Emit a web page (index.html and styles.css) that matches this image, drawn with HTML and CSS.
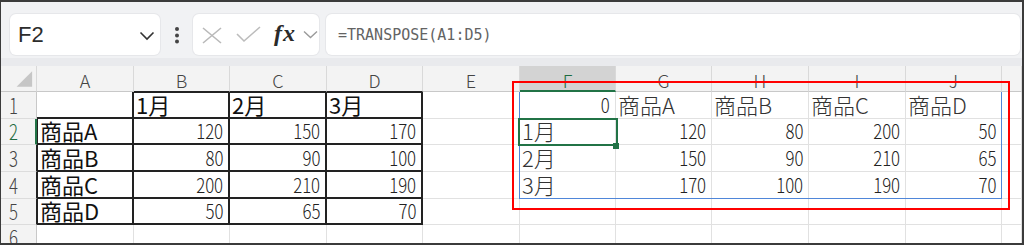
FILE: index.html
```html
<!DOCTYPE html>
<html lang="ja">
<head>
<meta charset="utf-8">
<title>TRANSPOSE</title>
<link rel="stylesheet" href="styles.css">
</head>
<body>
<div class="frame">
  <div class="toolbar">
    <div class="box namebox">
      <span class="val">F2</span>
      <svg class="chev" width="16" height="10" viewBox="0 0 16 10"><path d="M1.5 1.5 L8 8 L14.5 1.5" fill="none" stroke="#333" stroke-width="1.6"/></svg>
    </div>
    <div class="dots">
      <svg width="6" height="18" viewBox="0 0 6 18"><circle cx="3" cy="3" r="2" fill="#444"/><circle cx="3" cy="9.5" r="2" fill="#444"/><circle cx="3" cy="15.5" r="2" fill="#444"/></svg>
    </div>
    <div class="box fxbox">
      <svg class="ic-x" width="20" height="17" viewBox="0 0 20 17"><path d="M1 1 L19 16 M19 1 L1 16" fill="none" stroke="#b9b9b9" stroke-width="1.6"/></svg>
      <svg class="ic-ok" width="25" height="17" viewBox="0 0 25 17"><path d="M1 8 L8 15 L24 1" fill="none" stroke="#bcbcbc" stroke-width="1.6"/></svg>
      <span class="fx">fx</span>
      <svg class="ic-dd" width="15" height="9" viewBox="0 0 15 9"><path d="M1 1.5 L7.5 7.5 L14 1.5" fill="none" stroke="#9a9a9a" stroke-width="1.4"/></svg>
    </div>
    <div class="box formula">=TRANSPOSE(A1:D5)</div>
  </div>

  <div class="grid">
    <!-- header row -->
    <div class="c h corner"><svg width="36" height="25" viewBox="0 0 36 25"><polygon points="16,21 32,5 32,21" fill="#c6c6c6"/></svg></div>
    <div class="c h">A</div>
    <div class="c h hb">B</div>
    <div class="c h hb">C</div>
    <div class="c h hb">D</div>
    <div class="c h">E</div>
    <div class="c h selc">F</div>
    <div class="c h">G</div>
    <div class="c h">H</div>
    <div class="c h">I</div>
    <div class="c h">J</div>
    <div class="c h"></div>

    <!-- row 1 -->
    <div class="c r"><span>1</span></div>
    <div class="c bd"></div>
    <div class="c t bd bt">1月</div>
    <div class="c t bd bt">2月</div>
    <div class="c t bd bt">3月</div>
    <div class="c"></div>
    <div class="c n"><span>0</span></div>
    <div class="c t sp">商品A</div>
    <div class="c t sp">商品B</div>
    <div class="c t sp">商品C</div>
    <div class="c t sp">商品D</div>
    <div class="c"></div>

    <!-- row 2 -->
    <div class="c r selr"><span>2</span></div>
    <div class="c t bd bl">商品A</div>
    <div class="c n bd"><span>120</span></div>
    <div class="c n bd"><span>150</span></div>
    <div class="c n bd"><span>170</span></div>
    <div class="c"></div>
    <div class="c t sp">1月</div>
    <div class="c n"><span>120</span></div>
    <div class="c n"><span>80</span></div>
    <div class="c n"><span>200</span></div>
    <div class="c n"><span>50</span></div>
    <div class="c"></div>

    <!-- row 3 -->
    <div class="c r rb"><span>3</span></div>
    <div class="c t bd bl">商品B</div>
    <div class="c n bd"><span>80</span></div>
    <div class="c n bd"><span>90</span></div>
    <div class="c n bd"><span>100</span></div>
    <div class="c"></div>
    <div class="c t sp">2月</div>
    <div class="c n"><span>150</span></div>
    <div class="c n"><span>90</span></div>
    <div class="c n"><span>210</span></div>
    <div class="c n"><span>65</span></div>
    <div class="c"></div>

    <!-- row 4 -->
    <div class="c r rb"><span>4</span></div>
    <div class="c t bd bl">商品C</div>
    <div class="c n bd"><span>200</span></div>
    <div class="c n bd"><span>210</span></div>
    <div class="c n bd"><span>190</span></div>
    <div class="c"></div>
    <div class="c t sp">3月</div>
    <div class="c n"><span>170</span></div>
    <div class="c n"><span>100</span></div>
    <div class="c n"><span>190</span></div>
    <div class="c n"><span>70</span></div>
    <div class="c"></div>

    <!-- row 5 -->
    <div class="c r rb"><span>5</span></div>
    <div class="c t bd bl">商品D</div>
    <div class="c n bd"><span>50</span></div>
    <div class="c n bd"><span>65</span></div>
    <div class="c n bd"><span>70</span></div>
    <div class="c"></div>
    <div class="c"></div>
    <div class="c"></div>
    <div class="c"></div>
    <div class="c"></div>
    <div class="c"></div>
    <div class="c"></div>

    <!-- row 6 -->
    <div class="c r"><span>6</span></div>
    <div class="c"></div>
    <div class="c"></div>
    <div class="c"></div>
    <div class="c"></div>
    <div class="c"></div>
    <div class="c"></div>
    <div class="c"></div>
    <div class="c"></div>
    <div class="c"></div>
    <div class="c"></div>
    <div class="c"></div>

    <div class="spill"></div>
    <div class="sel"></div>
    <div class="handle"></div>
    <div class="note"></div>
  </div>
</div>
</body>
</html>
```
FILE: styles.css
```css
* { box-sizing: border-box; margin: 0; padding: 0; }
html, body { width: 1024px; height: 245px; overflow: hidden; background: #fff; }

.frame {
  width: 1024px;
  height: 245px;
  border: solid #3b3b3b;
  border-width: 2px 2px 2px 1px;
  overflow: hidden;
  display: flex;
  flex-direction: column;
  background: #fff;
}

/* ---------- toolbar ---------- */
.toolbar {
  flex: none;
  height: 64px;
  display: flex;
  align-items: center;
  background: #f1f2f4;
  padding: 12px 2px 3px 9px;
  border-bottom: 8px solid #e9eaed;
}
.box {
  height: 41px;
  background: #fff;
  border-radius: 6px;
  display: flex;
  align-items: center;
  box-shadow: 0 0 0 1px #e6e7ea;
}
.namebox {
  width: 150px;
  padding: 0 5px 0 8px;
  justify-content: space-between;
}
.namebox .val {
  font: 22px "Liberation Sans", Arial, sans-serif;
  color: #2c2c2c;
}
.chev { margin-top: 2px; }
.dots {
  width: 33px;
  display: flex;
  justify-content: center;
}
.dots svg { margin-left: 1px; margin-top: 1px; }
.fxbox {
  width: 126px;
  padding-left: 9px;
}
.ic-x { margin-top: 1px; }
.ic-ok { margin-left: 14px; margin-top: -1px; }
.fx {
  margin-left: 13px;
  font: italic bold 24px "Liberation Serif", "Times New Roman", serif;
  letter-spacing: 1px;
  color: #2a2a2a;
  line-height: 1;
  margin-top: -3px;
}
.ic-dd { margin-left: 7px; }
.formula {
  flex: 1;
  margin-left: 7px;
  padding-left: 12px;
  font: 15px "DejaVu Sans Mono", monospace;
  color: #636363;
}

/* ---------- grid ---------- */
.grid {
  position: relative;
  flex: none;
  display: grid;
  grid-template-columns: 36px 97px 96px 97px 96px 97px 96px 96px 97px 97px 96px 1fr;
  grid-template-rows: 26px 27px 26px 27px 27px 26px 26px;
  font-family: "Noto Sans CJK JP", sans-serif;
}
.c {
  display: flex;
  align-items: flex-end;
  border-right: 1px solid #e1e1e1;
  border-bottom: 1px solid #e1e1e1;
  padding: 0 5px 3px 2px;
  font-size: 22px;
  line-height: 1;
  color: #111;
  white-space: nowrap;
}
.t { justify-content: flex-start; }
.sp { color: #333; font-weight: 300; }
.n { justify-content: flex-end; color: #222; }
.n span {
  display: inline-block;
  font-size: 20px;
  font-weight: 300;
  transform: scaleX(.84);
  transform-origin: 100% 100%;
}

/* headers */
.h {
  background: #f3f3f3;
  justify-content: center;
  padding: 0 0 2px 0;
  font-size: 18px;
  font-weight: 300;
  color: #444;
  border-right-color: #d9d9d9;
  border-bottom-color: #c8c8c8;
}
.corner { padding: 0; align-items: flex-start; justify-content: flex-start; }
.corner svg { display: block; }
.hb { border-bottom-color: #222; }
.selc {
  background: #d3d3d3;
  color: #1d6b40;
  border-bottom: 2px solid #217346;
  padding-bottom: 1px;
}
.r {
  background: #f3f3f3;
  padding: 0 0 2px 8px;
  color: #444;
  border-right-color: #c8c8c8;
  border-bottom-color: #dcdcdc;
}
.r span {
  display: inline-block;
  font-size: 21px;
  font-weight: 300;
  transform: scaleX(.8);
  transform-origin: 0 100%;
}
.rb { border-right-color: #222; }
.selr {
  color: #1d6b40;
  border-right: 2px solid #217346;
}

/* table borders A1:D5 */
.bd {
  border-right: 2px solid #222;
  border-bottom: 2px solid #222;
  padding-bottom: 2px;
}
.bt { box-shadow: inset 0 1px 0 #222; }
.bl { box-shadow: inset 1px 0 0 #222; padding-left: 3px; }

/* overlays */
.spill {
  position: absolute;
  left: 518px;
  top: 26px;
  width: 483px;
  height: 107px;
  border: 1px solid #4f86d9;
  border-top: 0;
}
.sel {
  position: absolute;
  left: 517px;
  top: 52px;
  width: 100px;
  height: 28px;
  border: 2px solid #217346;
}
.handle {
  position: absolute;
  left: 612px;
  top: 77px;
  width: 6px;
  height: 6px;
  background: #217346;
}
.note {
  position: absolute;
  left: 511px;
  top: 15px;
  width: 498px;
  height: 129px;
  border: 2px solid #f00;
}
```
